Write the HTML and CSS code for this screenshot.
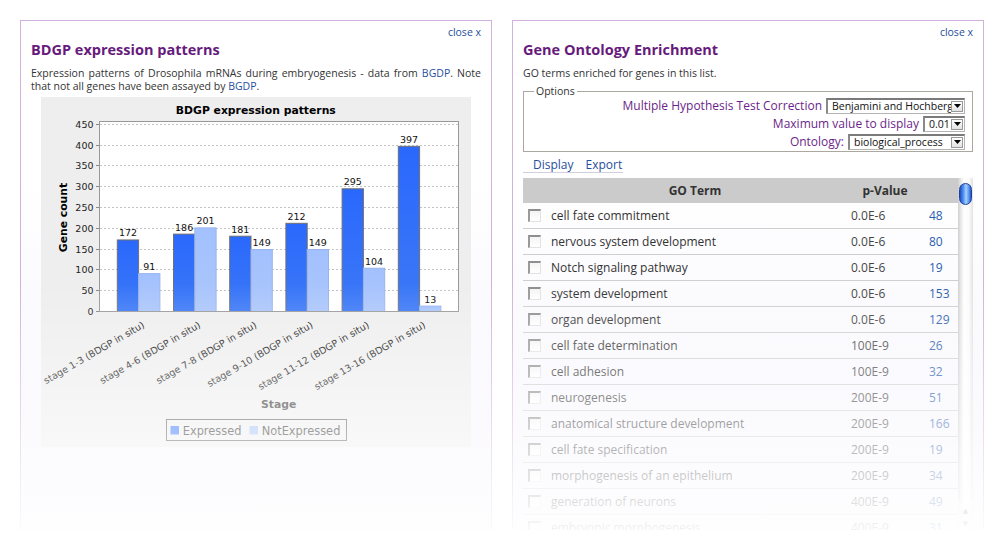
FILE: index.html
```html
<!DOCTYPE html>
<html>
<head>
<meta charset="utf-8">
<title>Gene list widgets</title>
<link rel="stylesheet" href="styles.css">
</head>
<body>
<div class="page">
  <section class="panel">
    <div class="close"><a href="#">close x</a></div>
    <h2 class="title">BDGP expression patterns</h2>
    <p class="desc"><span class="line1">Expression patterns of Drosophila mRNAs during embryogenesis - data from <a href="#">BGDP</a>. Note</span>that not all genes have been assayed by <a href="#">BGDP</a>.</p>
    <div class="chart">
      <svg class="chart-svg" width="430" height="350" viewBox="0 0 430 350" font-family="DejaVu Sans, sans-serif">
        <defs>
          <linearGradient id="ge" x1="0" y1="0" x2="0" y2="1">
            <stop offset="0" stop-color="#2a68fd"/>
            <stop offset="1" stop-color="#3c79f6"/>
          </linearGradient>
          <linearGradient id="gn" x1="0" y1="0" x2="0" y2="1">
            <stop offset="0" stop-color="#a3c1ff"/>
            <stop offset="1" stop-color="#abc6fb"/>
          </linearGradient>
        </defs>
        <text x="214.8" y="17" text-anchor="middle" font-weight="bold" font-size="10.8" fill="#000">BDGP expression patterns</text>
        <rect x="58.5" y="24.5" width="359" height="190" fill="#fff"/>
        <g stroke="#c4c4c4" stroke-width="1" stroke-dasharray="2 2">
          <line x1="59" y1="193.5" x2="417" y2="193.5"/>
          <line x1="59" y1="172.5" x2="417" y2="172.5"/>
          <line x1="59" y1="152.5" x2="417" y2="152.5"/>
          <line x1="59" y1="131.5" x2="417" y2="131.5"/>
          <line x1="59" y1="110.5" x2="417" y2="110.5"/>
          <line x1="59" y1="89.5" x2="417" y2="89.5"/>
          <line x1="59" y1="68.5" x2="417" y2="68.5"/>
          <line x1="59" y1="48.5" x2="417" y2="48.5"/>
          <line x1="59" y1="27.5" x2="417" y2="27.5"/>
        </g>
        <g stroke="#888" stroke-width="1">
          <line x1="55" y1="214.5" x2="58.5" y2="214.5"/>
          <line x1="55" y1="193.5" x2="58.5" y2="193.5"/>
          <line x1="55" y1="172.5" x2="58.5" y2="172.5"/>
          <line x1="55" y1="152.5" x2="58.5" y2="152.5"/>
          <line x1="55" y1="131.5" x2="58.5" y2="131.5"/>
          <line x1="55" y1="110.5" x2="58.5" y2="110.5"/>
          <line x1="55" y1="89.5" x2="58.5" y2="89.5"/>
          <line x1="55" y1="68.5" x2="58.5" y2="68.5"/>
          <line x1="55" y1="48.5" x2="58.5" y2="48.5"/>
          <line x1="55" y1="27.5" x2="58.5" y2="27.5"/>
        </g>
        <g font-size="9.5" fill="#222" text-anchor="end">
          <text x="52.5" y="218">0</text>
          <text x="52.5" y="197">50</text>
          <text x="52.5" y="176">100</text>
          <text x="52.5" y="156">150</text>
          <text x="52.5" y="135">200</text>
          <text x="52.5" y="114">250</text>
          <text x="52.5" y="93">300</text>
          <text x="52.5" y="72">350</text>
          <text x="52.5" y="52">400</text>
          <text x="52.5" y="31">450</text>
        </g>
        <g stroke="#707070" stroke-width="1" fill="url(#ge)">
          <rect x="76.3" y="142.95" width="21.3" height="71.55"/>
          <rect x="132.5" y="137.12" width="21.3" height="77.38"/>
          <rect x="188.7" y="139.2" width="21.3" height="75.3"/>
          <rect x="244.9" y="126.31" width="21.3" height="88.19"/>
          <rect x="301.1" y="91.78" width="21.3" height="122.72"/>
          <rect x="357.3" y="49.35" width="21.3" height="165.15"/>
        </g>
        <g stroke="#98b4ec" stroke-width="1" fill="url(#gn)">
          <rect x="97.6" y="176.64" width="21.3" height="37.86"/>
          <rect x="153.8" y="130.88" width="21.3" height="83.62"/>
          <rect x="210" y="152.52" width="21.3" height="61.98"/>
          <rect x="266.2" y="152.52" width="21.3" height="61.98"/>
          <rect x="322.4" y="171.24" width="21.3" height="43.26"/>
          <rect x="378.6" y="209.09" width="21.3" height="5.41"/>
        </g>
        <line x1="58.5" y1="24.5" x2="58.5" y2="214.5" stroke="#888"/>
        <rect x="58.5" y="24.5" width="359" height="190" fill="none" stroke="#999"/>
        <g font-size="9.5" fill="#111" text-anchor="middle">
          <text x="86.95" y="139.4">172</text>
          <text x="143.15" y="133.6">186</text>
          <text x="199.35" y="135.7">181</text>
          <text x="255.55" y="122.8">212</text>
          <text x="311.75" y="88.3">295</text>
          <text x="367.95" y="45.8">397</text>
          <text x="108.25" y="173.1">91</text>
          <text x="164.45" y="127.4">201</text>
          <text x="220.65" y="149">149</text>
          <text x="276.85" y="149">149</text>
          <text x="333.05" y="167.7">104</text>
          <text x="389.25" y="205.6">13</text>
        </g>
        <g font-size="9.5" fill="#111" text-anchor="end">
          <text transform="translate(104.1 230) rotate(-30)">stage 1-3 (BDGP in situ)</text>
          <text transform="translate(160.3 230) rotate(-30)">stage 4-6 (BDGP in situ)</text>
          <text transform="translate(216.5 230) rotate(-30)">stage 7-8 (BDGP in situ)</text>
          <text transform="translate(272.7 230) rotate(-30)">stage 9-10 (BDGP in situ)</text>
          <text transform="translate(328.9 230) rotate(-30)">stage 11-12 (BDGP in situ)</text>
          <text transform="translate(385.1 230) rotate(-30)">stage 13-16 (BDGP in situ)</text>
        </g>
        <text transform="translate(26.3 120.5) rotate(-90)" text-anchor="middle" font-weight="bold" font-size="10.8" fill="#000">Gene count</text>
        <text x="237.7" y="311" text-anchor="middle" font-weight="bold" font-size="10.8" fill="#333">Stage</text>
        <rect x="125.5" y="322.5" width="180" height="21" fill="none" stroke="#555"/>
        <rect x="129.5" y="329" width="8.5" height="8.5" fill="#2f6efb"/>
        <text x="141.7" y="338" font-size="11.4" fill="#222">Expressed</text>
        <rect x="208.5" y="329" width="8.5" height="8.5" fill="#a0bff6"/>
        <text x="220.7" y="338" font-size="11.4" fill="#222">NotExpressed</text>
      </svg>
    </div>
  </section>

  <section class="panel">
    <div class="close"><a href="#">close x</a></div>
    <h2 class="title">Gene Ontology Enrichment</h2>
    <p class="intro">GO terms enriched for genes in this list.</p>
    <fieldset class="options">
      <legend>Options</legend>
      <div class="opt-row">
        <span class="opt-label">Multiple Hypothesis Test Correction</span>
        <span class="sel sel-mht"><span class="val">Benjamini and Hochberg</span><span class="arr"><svg width="7" height="4" viewBox="0 0 7 4"><path d="M0 0H7L3.5 4Z" fill="#000"/></svg></span></span>
      </div>
      <div class="opt-row">
        <span class="opt-label">Maximum value to display</span>
        <span class="sel sel-max"><span class="val">0.01</span><span class="arr"><svg width="7" height="4" viewBox="0 0 7 4"><path d="M0 0H7L3.5 4Z" fill="#000"/></svg></span></span>
      </div>
      <div class="opt-row">
        <span class="opt-label">Ontology:</span>
        <span class="sel sel-ont"><span class="val">biological_process</span><span class="arr"><svg width="7" height="4" viewBox="0 0 7 4"><path d="M0 0H7L3.5 4Z" fill="#000"/></svg></span></span>
      </div>
    </fieldset>
    <div class="tabs"><a href="#">Display</a><a href="#">Export</a></div>
    <div class="table">
      <div class="grid">
        <div class="thead"><span class="h-term">GO Term</span><span class="h-p">p-Value</span></div>
        <div class="row"><span class="c-cb"><span class="cb"></span></span><span class="c-term">cell fate commitment</span><span class="c-p">0.0E-6</span><a class="c-n" href="#">48</a></div>
        <div class="row"><span class="c-cb"><span class="cb"></span></span><span class="c-term">nervous system development</span><span class="c-p">0.0E-6</span><a class="c-n" href="#">80</a></div>
        <div class="row"><span class="c-cb"><span class="cb"></span></span><span class="c-term">Notch signaling pathway</span><span class="c-p">0.0E-6</span><a class="c-n" href="#">19</a></div>
        <div class="row"><span class="c-cb"><span class="cb"></span></span><span class="c-term">system development</span><span class="c-p">0.0E-6</span><a class="c-n" href="#">153</a></div>
        <div class="row"><span class="c-cb"><span class="cb"></span></span><span class="c-term">organ development</span><span class="c-p">0.0E-6</span><a class="c-n" href="#">129</a></div>
        <div class="row"><span class="c-cb"><span class="cb"></span></span><span class="c-term">cell fate determination</span><span class="c-p">100E-9</span><a class="c-n" href="#">26</a></div>
        <div class="row"><span class="c-cb"><span class="cb"></span></span><span class="c-term">cell adhesion</span><span class="c-p">100E-9</span><a class="c-n" href="#">32</a></div>
        <div class="row"><span class="c-cb"><span class="cb"></span></span><span class="c-term">neurogenesis</span><span class="c-p">200E-9</span><a class="c-n" href="#">51</a></div>
        <div class="row"><span class="c-cb"><span class="cb"></span></span><span class="c-term">anatomical structure development</span><span class="c-p">200E-9</span><a class="c-n" href="#">166</a></div>
        <div class="row"><span class="c-cb"><span class="cb"></span></span><span class="c-term">cell fate specification</span><span class="c-p">200E-9</span><a class="c-n" href="#">19</a></div>
        <div class="row"><span class="c-cb"><span class="cb"></span></span><span class="c-term">morphogenesis of an epithelium</span><span class="c-p">200E-9</span><a class="c-n" href="#">34</a></div>
        <div class="row"><span class="c-cb"><span class="cb"></span></span><span class="c-term">generation of neurons</span><span class="c-p">400E-9</span><a class="c-n" href="#">49</a></div>
        <div class="row"><span class="c-cb"><span class="cb"></span></span><span class="c-term">embryonic morphogenesis</span><span class="c-p">400E-9</span><a class="c-n" href="#">31</a></div>
      </div>
      <div class="sb">
        <div class="track"><div class="thumb"></div></div>
        <div class="arrows"><span>&#9650;</span><span>&#9660;</span></div>
      </div>
    </div>
  </section>
</div>
<div class="fade"></div>
</body>
</html>
```

FILE: styles.css
```css
html, body {
  margin: 0;
  padding: 0;
  background: #fff;
}
body {
  position: relative;
  height: 547px;
  overflow: hidden;
  font-family: "Open Sans", "DejaVu Sans", sans-serif;
  color: #333;
}
a {
  color: #1f4f9c;
  text-decoration: none;
}
.page {
  display: flex;
  gap: 20px;
  padding: 20px 0 0 20px;
}
.panel {
  width: 472px;
  height: 510px;
  box-sizing: border-box;
  border: 1px solid #d2b2dc;
  border-bottom: none;
  padding: 0 10px;
  display: flex;
  flex-direction: column;
  background: linear-gradient(#ffffff 0, #ffffff 160px, #f3f1fb 100%);
}
.close {
  text-align: right;
  font-size: 10.5px;
  line-height: 13px;
  padding-top: 5px;
}
.title {
  margin: 2px 0 0;
  font-size: 14.5px;
  line-height: 18px;
  font-weight: bold;
  color: #671a7c;
}
.desc {
  margin: 8px 0 0;
  font-size: 10.5px;
  line-height: 13px;
  text-align: justify;
}
.line1 {
  display: block;
  text-align-last: justify;
}
.chart {
  margin: 4px 0 0 10px;
  width: 430px;
  height: 350px;
  background: #eeeeee;
}
.chart-svg {
  display: block;
}
.intro {
  margin: 8px 0 0;
  font-size: 10.5px;
  line-height: 13px;
}
.options {
  margin: 4.5px 0 0;
  padding: 0 7px 1px 10px;
  border: 1px solid #aba99f;
  min-width: 0;
}
.options legend {
  padding: 0 2px;
  font-size: 10.5px;
  line-height: 13px;
  color: #333;
}
.opt-row {
  display: flex;
  justify-content: flex-end;
  align-items: center;
  gap: 4px;
  height: 16px;
  margin-bottom: 2px;
}
.opt-row:last-child {
  margin-bottom: 0;
}
.opt-label {
  font-size: 12px;
  line-height: 16px;
  color: #6c1f8a;
  white-space: nowrap;
}
.sel {
  display: flex;
  align-items: center;
  height: 16px;
  box-sizing: border-box;
  border: 1px solid #b4b4b4;
  border-top: 2px solid #7a7a7a;
  border-left: 2px solid #8a8a8a;
  background: #fff;
  overflow: hidden;
}
.sel-mht { width: 139px; }
.sel-max { width: 42px; }
.sel-ont { width: 117px; }
.sel .val {
  flex: 1;
  min-width: 0;
  padding-left: 4px;
  font-size: 10.5px;
  line-height: 13px;
  color: #111;
  white-space: nowrap;
  overflow: hidden;
}
.sel .arr {
  width: 12px;
  height: 11px;
  margin-right: 1px;
  box-sizing: border-box;
  border: 1px solid #9a9a9a;
  background: linear-gradient(#ffffff, #e2e2e2);
  display: flex;
  align-items: center;
  justify-content: center;
}
.sel .arr svg {
  display: block;
}
.tabs {
  margin-top: 5px;
  width: 100px;
  box-sizing: border-box;
  padding-left: 10px;
  border-bottom: 1px solid #cfd0dc;
  display: flex;
  gap: 12px;
  font-size: 12px;
  line-height: 15px;
}
.table {
  margin-top: 5.5px;
  flex: 1;
  min-height: 0;
  display: flex;
  overflow: hidden;
}
.grid {
  width: 435px;
}
.thead {
  height: 25px;
  background: #cbcbcb;
  display: flex;
  align-items: center;
  font-size: 12px;
  font-weight: bold;
  color: #333;
}
.h-term {
  width: 344px;
  text-align: center;
}
.h-p {
  width: 36px;
  display: flex;
  justify-content: center;
  white-space: nowrap;
}
.row {
  height: 26px;
  box-sizing: border-box;
  border-bottom: 1px solid #cfcfcf;
  display: grid;
  grid-template-columns: 28px 300px 78px 1fr;
  align-items: center;
  font-size: 12px;
  line-height: 25px;
}
.c-cb {
  display: flex;
  align-items: center;
  padding-left: 5px;
}
.cb {
  width: 13px;
  height: 13px;
  box-sizing: border-box;
  border-style: solid;
  border-width: 2px 1px 1px 2px;
  border-color: #8e8e8e #e2e2e2 #e2e2e2 #9a9a9a;
  background: linear-gradient(#f4f4f4, #ffffff);
}
.c-term {
  color: #333;
  white-space: nowrap;
}
.c-p {
  color: #444;
  white-space: nowrap;
}
.c-n {
  color: #2b5eae;
}
.sb {
  width: 15px;
  display: flex;
  flex-direction: column;
}
.track {
  flex: 1;
  border-radius: 0 0 7px 7px;
  background: linear-gradient(to right, #cfcfcf 0, #e9e9e9 3px, #ffffff 6px, #fbfbfb 11px, #e2e2e2 15px);
  padding-top: 5px;
}
.thumb {
  margin: 0 1px;
  height: 22px;
  box-sizing: border-box;
  border: 1px solid #1c409a;
  border-radius: 7px;
  background: linear-gradient(to right, #1d4fc4 0, #4f8ef0 30%, #a6d0ff 55%, #5a98f0 80%, #2357c8 100%);
}
.arrows {
  height: 25px;
  display: flex;
  flex-direction: column;
  align-items: center;
  justify-content: space-around;
  font-size: 7px;
  line-height: 8px;
  color: #777;
  background: linear-gradient(to right, #e6e6e6, #ffffff 50%, #eeeeee);
}
.fade {
  position: absolute;
  left: 0;
  top: 0;
  width: 100%;
  height: 547px;
  pointer-events: none;
  background: linear-gradient(to bottom, rgba(255,255,255,0) 284px, rgba(255,255,255,1) 547px);
}
```
